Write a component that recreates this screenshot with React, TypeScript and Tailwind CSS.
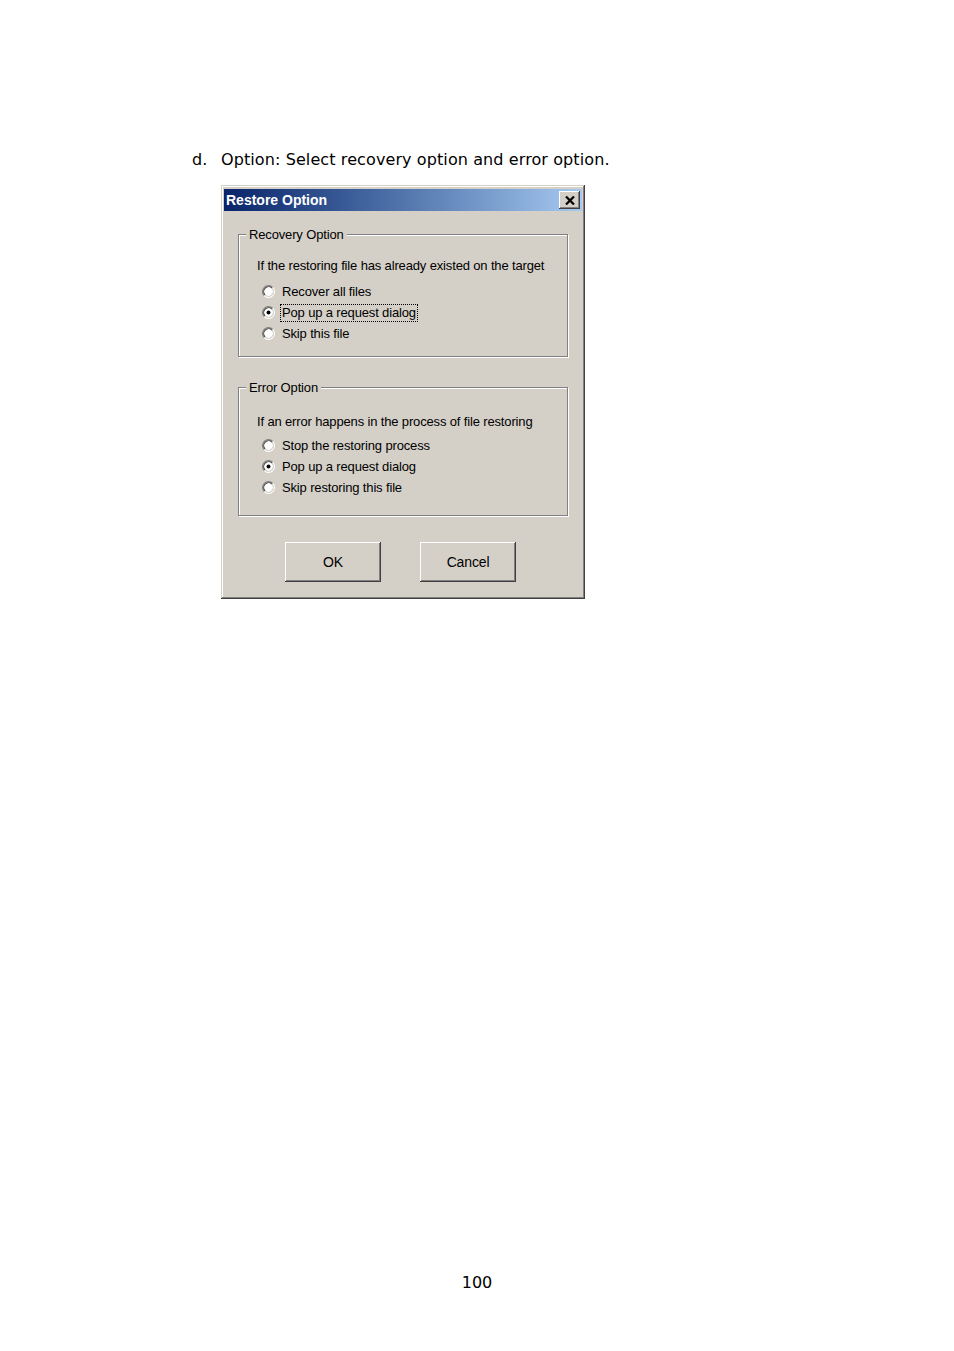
import React from "react";

const face = "#d4d0c8";

function Radio({ checked }: { checked?: boolean }) {
  return (
    <svg width="13" height="13" viewBox="0 0 12 12" className="shrink-0">
      <circle cx="6" cy="6" r="4.5" fill="#ffffff" />
      <path d="M2.11 9.89 A5.5 5.5 0 0 1 9.89 2.11" fill="none" stroke="#808080" strokeWidth="1" />
      <path d="M9.89 2.11 A5.5 5.5 0 0 1 2.11 9.89" fill="none" stroke="#ffffff" strokeWidth="1" />
      <path d="M2.82 9.18 A4.5 4.5 0 0 1 9.18 2.82" fill="none" stroke="#404040" strokeWidth="1" />
      <path d="M9.18 2.82 A4.5 4.5 0 0 1 2.82 9.18" fill="none" stroke={face} strokeWidth="1" />
      {checked && <circle cx="6" cy="6" r="1.8" fill="#000000" />}
    </svg>
  );
}

function Option({ label, checked, focused }: { label: string; checked?: boolean; focused?: boolean }) {
  return (
    <div className="flex h-[21px] items-center">
      <Radio checked={checked} />
      <span
        className={
          "ml-[5px] px-px leading-[16px] border " +
          (focused ? "border-dotted border-black" : "border-transparent")
        }
      >
        {label}
      </span>
    </div>
  );
}

function GroupBox({
  title,
  prompt,
  options,
  height,
  promptTop,
  gap,
}: {
  title: string;
  prompt: string;
  options: { label: string; checked?: boolean; focused?: boolean }[];
  height: string;
  promptTop: string;
  gap: string;
}) {
  return (
    <div
      className={
        "relative ml-[14px] mr-[14px] border border-[#808080] shadow-[1px_1px_0_#ffffff,inset_1px_1px_0_#ffffff] " +
        height
      }
    >
      <span className="absolute -top-[8px] left-[7px] bg-[#d4d0c8] px-[3px] leading-[16px]">{title}</span>
      <div className={"pl-[18px] leading-[16px] " + promptTop}>{prompt}</div>
      <div className={"pl-[23px] " + gap}>
        {options.map((o) => (
          <Option key={o.label} {...o} />
        ))}
      </div>
    </div>
  );
}

function WinButton({ label }: { label: string }) {
  return (
    <button className="flex h-[40px] w-[96px] items-center justify-center bg-[#d4d0c8] text-[14px] shadow-[inset_-1px_-1px_0_#404040,inset_1px_1px_0_#ffffff,inset_-2px_-2px_0_#808080,inset_2px_2px_0_#d4d0c8]">
      {label}
    </button>
  );
}

export default function App() {
  return (
    <div className="min-h-[1351px] w-[954px] bg-white text-black">
      <div
        className="flex pt-[150px] text-[16px] leading-[20px] tracking-[0.1px]"
        style={{ fontFamily: '"DejaVu Sans", Verdana, sans-serif' }}
      >
        <span className="ml-[192px] w-[29px]">d.</span>
        <span>Option: Select recovery option and error option.</span>
      </div>

      <div
        className="ml-[221px] mt-[15px] flex h-[414px] w-[364px] flex-col bg-[#d4d0c8] px-[3px] pt-[4px] text-[13px] tracking-[-0.15px] shadow-[inset_-1px_-1px_0_#404040,inset_1px_1px_0_#d4d0c8,inset_-2px_-2px_0_#808080,inset_2px_2px_0_#ffffff]"
        style={{ fontFamily: '"Liberation Sans", Arial, sans-serif' }}
      >
        <div className="flex h-[22px] items-center justify-between bg-gradient-to-r from-[#0a246a] to-[#a6caf0]">
          <span className="pl-[2px] text-[14px] font-bold tracking-normal text-white">Restore Option</span>
          <div className="mr-[2px] flex h-[18px] w-[21px] items-center justify-center bg-[#d4d0c8] shadow-[inset_-1px_-1px_0_#404040,inset_1px_1px_0_#ffffff,inset_-2px_-2px_0_#808080,inset_2px_2px_0_#d4d0c8]">
            <svg width="10" height="9" viewBox="0 0 10 9">
              <path d="M1 0.5 L9 8.5 M9 0.5 L1 8.5" stroke="#000" strokeWidth="2.2" />
            </svg>
          </div>
        </div>

        <div className="mt-[23px]">
          <GroupBox
            title="Recovery Option"
            prompt="If the restoring file has already existed on the target"
            height="h-[123px]"
            promptTop="pt-[23px]"
            gap="mt-[7px]"
            options={[
              { label: "Recover all files" },
              { label: "Pop up a request dialog", checked: true, focused: true },
              { label: "Skip this file" },
            ]}
          />
        </div>

        <div className="mt-[30px]">
          <GroupBox
            title="Error Option"
            prompt="If an error happens in the process of file restoring"
            height="h-[129px]"
            promptTop="pt-[26px]"
            gap="mt-[5px]"
            options={[
              { label: "Stop the restoring process" },
              { label: "Pop up a request dialog", checked: true },
              { label: "Skip restoring this file" },
            ]}
          />
        </div>

        <div className="mt-[26px] flex gap-[39px] pl-[61px]">
          <WinButton label="OK" />
          <WinButton label="Cancel" />
        </div>
      </div>

      <div
        className="mt-[674px] text-center text-[16px] leading-[20px]"
        style={{ fontFamily: '"DejaVu Sans", Verdana, sans-serif' }}
      >
        100
      </div>
    </div>
  );
}
